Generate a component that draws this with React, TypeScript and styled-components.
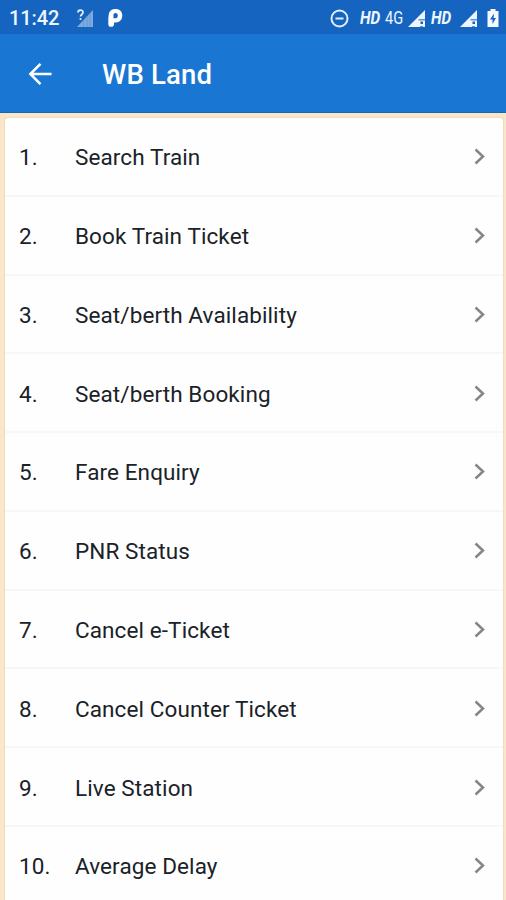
import React from "react";
import styled, { createGlobalStyle } from "styled-components";

const GlobalStyle = createGlobalStyle`
  * { box-sizing: border-box; }
  html, body { margin: 0; height: 100%; overflow: hidden; }
  body { background: #fae6c9; font-family: Roboto, sans-serif; }
`;

const Screen = styled.div`
  display: flex;
  flex-direction: column;
  height: 900px;
  overflow: hidden;
`;

const StatusBar = styled.header`
  flex: none;
  display: flex;
  justify-content: space-between;
  height: 34px;
  padding: 2px 7px 0 9px;
  background: #1565c0;
  color: #eef5ff;
`;

const StatusGroup = styled.div`
  display: flex;
  align-items: center;
`;

const Clock = styled.span`
  width: 68px;
  font-size: 20px;
  font-weight: 500;
  letter-spacing: -0.1px;
`;

const NetworkLabel = styled.span<{ $width: number; $bold?: boolean }>`
  width: ${(p) => p.$width}px;
  margin-top: -1px;
  font-size: ${(p) => (p.$bold ? 17.5 : 18)}px;
  font-weight: ${(p) => (p.$bold ? 700 : 400)};
  font-style: ${(p) => (p.$bold ? "italic" : "normal")};
  transform: scaleX(${(p) => (p.$bold ? 0.88 : 0.81)});
  transform-origin: left center;
  white-space: nowrap;
`;

const Icon = styled.svg<{ $gap?: number }>`
  display: block;
  flex: none;
  margin-right: ${(p) => p.$gap ?? 0}px;
`;

const AppBar = styled.div`
  flex: none;
  display: flex;
  align-items: center;
  height: 79px;
  padding: 2px 28px 0;
  background: #1976d2;
  border-bottom: 1px solid #1567bd;
  color: #fff;
`;

const BackButton = styled.button`
  width: 74px;
  padding: 0;
  border: 0;
  background: none;
  color: inherit;
`;

const Title = styled.h1`
  margin: 0;
  font-size: 27.5px;
  font-weight: 500;
  letter-spacing: 0.2px;
`;

const Content = styled.main`
  flex: 1;
  padding: 5px 3px 0 5px;
  overflow: hidden;
`;

const Menu = styled.ul`
  margin: 0;
  padding: 0;
  height: 900px;
  list-style: none;
  background: #fefefe;
  border-radius: 3px 3px 0 0;
  box-shadow: 0 0 1px 1px #efdcbe;
`;

const MenuItem = styled.li`
  display: flex;
  align-items: center;
  height: 78.78px;
  padding: 2px 16px 0 14px;
  border-bottom: 2px solid #f7f7f7;
  color: #1a2228;
  font-size: 22.5px;
  font-weight: 450;
  letter-spacing: 0.1px;
`;

const Index = styled.span`
  width: 56px;
`;

const Label = styled.span`
  flex: 1;
  white-space: nowrap;
`;

const items = [
  "Search Train",
  "Book Train Ticket",
  "Seat/berth Availability",
  "Seat/berth Booking",
  "Fare Enquiry",
  "PNR Status",
  "Cancel e-Ticket",
  "Cancel Counter Ticket",
  "Live Station",
  "Average Delay",
];

function SignalIcon({ gap }: { gap: number }) {
  return (
    <Icon $gap={gap} width="17" height="17" viewBox="0 0 17 17">
      <path d="M17 0v17H0z" fill="#eef5ff" />
      <path d="M10.5 9h6.5v1.500h-6.500z" fill="#5c94d8" />
      <path d="M12.500 11.500h2.500v2.500h-2.500z" fill="#1565c0" />
      <path d="M12 16.500h3" stroke="#5c94d8" />
    </Icon>
  );
}

export default function App() {
  return (
    <>
      <GlobalStyle />
      <Screen>
        <StatusBar>
          <StatusGroup>
            <Clock>11:42</Clock>
            <Icon $gap={15} width="16" height="18" viewBox="0 0 16 18">
              <path d="M16 1v17H0z" fill="#7faade" />
              <path d="M6.500 11v7M10 7v11M13 4v14" stroke="#5f94d3" strokeWidth="0.800" />
              <path d="M0 0h7v11H0z" fill="#1565c0" />
              <path d="M1 3.500C1 0.300 6 0.300 6 3.300C6 5.400 3.500 5.500 3.500 7.600" fill="none" stroke="#e3eefb" strokeWidth="1.800" />
              <circle cx="3.500" cy="10" r="1.100" fill="#e3eefb" />
            </Icon>
            <Icon width="15" height="18" viewBox="0 0 15 18">
              <path d="M.8 5.500C1.200 1.800 4 0 7.500 0c4.300 0 6.800 2.600 6.800 6.600 0 4.100-2.700 6.900-6.600 6.900H6v1.700C6 16.900 4.900 17.800 3.100 17.800S.3 16.900.3 15.200V9z" fill="#fff" />
              <path d="M5.500 9.300V5.900C5.500 4.700 6.300 4 7.500 4 8.900 4 9.800 5 9.800 6.500c0 1.700-.9 2.800-2.300 2.800z" fill="#1565c0" />
            </Icon>
          </StatusGroup>
          <StatusGroup>
            <Icon $gap={11} width="19" height="19" viewBox="0 0 19 19" fill="none" stroke="#e3eefb" strokeWidth="2">
              <circle cx="9.500" cy="9.500" r="8" />
              <path d="M5.500 9.500h8" />
            </Icon>
            <NetworkLabel $width={25} $bold>HD</NetworkLabel>
            <NetworkLabel $width={23}>4G</NetworkLabel>
            <SignalIcon gap={6} />
            <NetworkLabel $width={29} $bold>HD</NetworkLabel>
            <SignalIcon gap={10} />
            <Icon width="12" height="18" viewBox="0 0 12 18">
              <path d="M3.500 0h5v2H11.500v16H.5V2h3z" fill="#f5f9ff" />
              <path d="M7 4.500L3 10.500h2.500V15L9 9H6.600z" fill="#1565c0" />
            </Icon>
          </StatusGroup>
        </StatusBar>
        <AppBar>
          <BackButton aria-label="Back">
            <Icon width="24" height="24" viewBox="0 0 24 24" fill="none" stroke="#fff" strokeWidth="2.500">
              <path d="M23.500 12H2.500M12.500 1.800L2.300 12l10.200 10.200" />
            </Icon>
          </BackButton>
          <Title>WB Land</Title>
        </AppBar>
        <Content>
          <Menu>
            {items.map((label, i) => (
              <MenuItem key={label}>
                <Index>{i + 1}.</Index>
                <Label>{label}</Label>
                <Icon width="14" height="18" viewBox="0 0 14 18" fill="none" stroke="#858585" strokeWidth="2.500">
                  <path d="M2.500 1.500L10 8.500L2.500 15.500" />
                </Icon>
              </MenuItem>
            ))}
          </Menu>
        </Content>
      </Screen>
    </>
  );
}
